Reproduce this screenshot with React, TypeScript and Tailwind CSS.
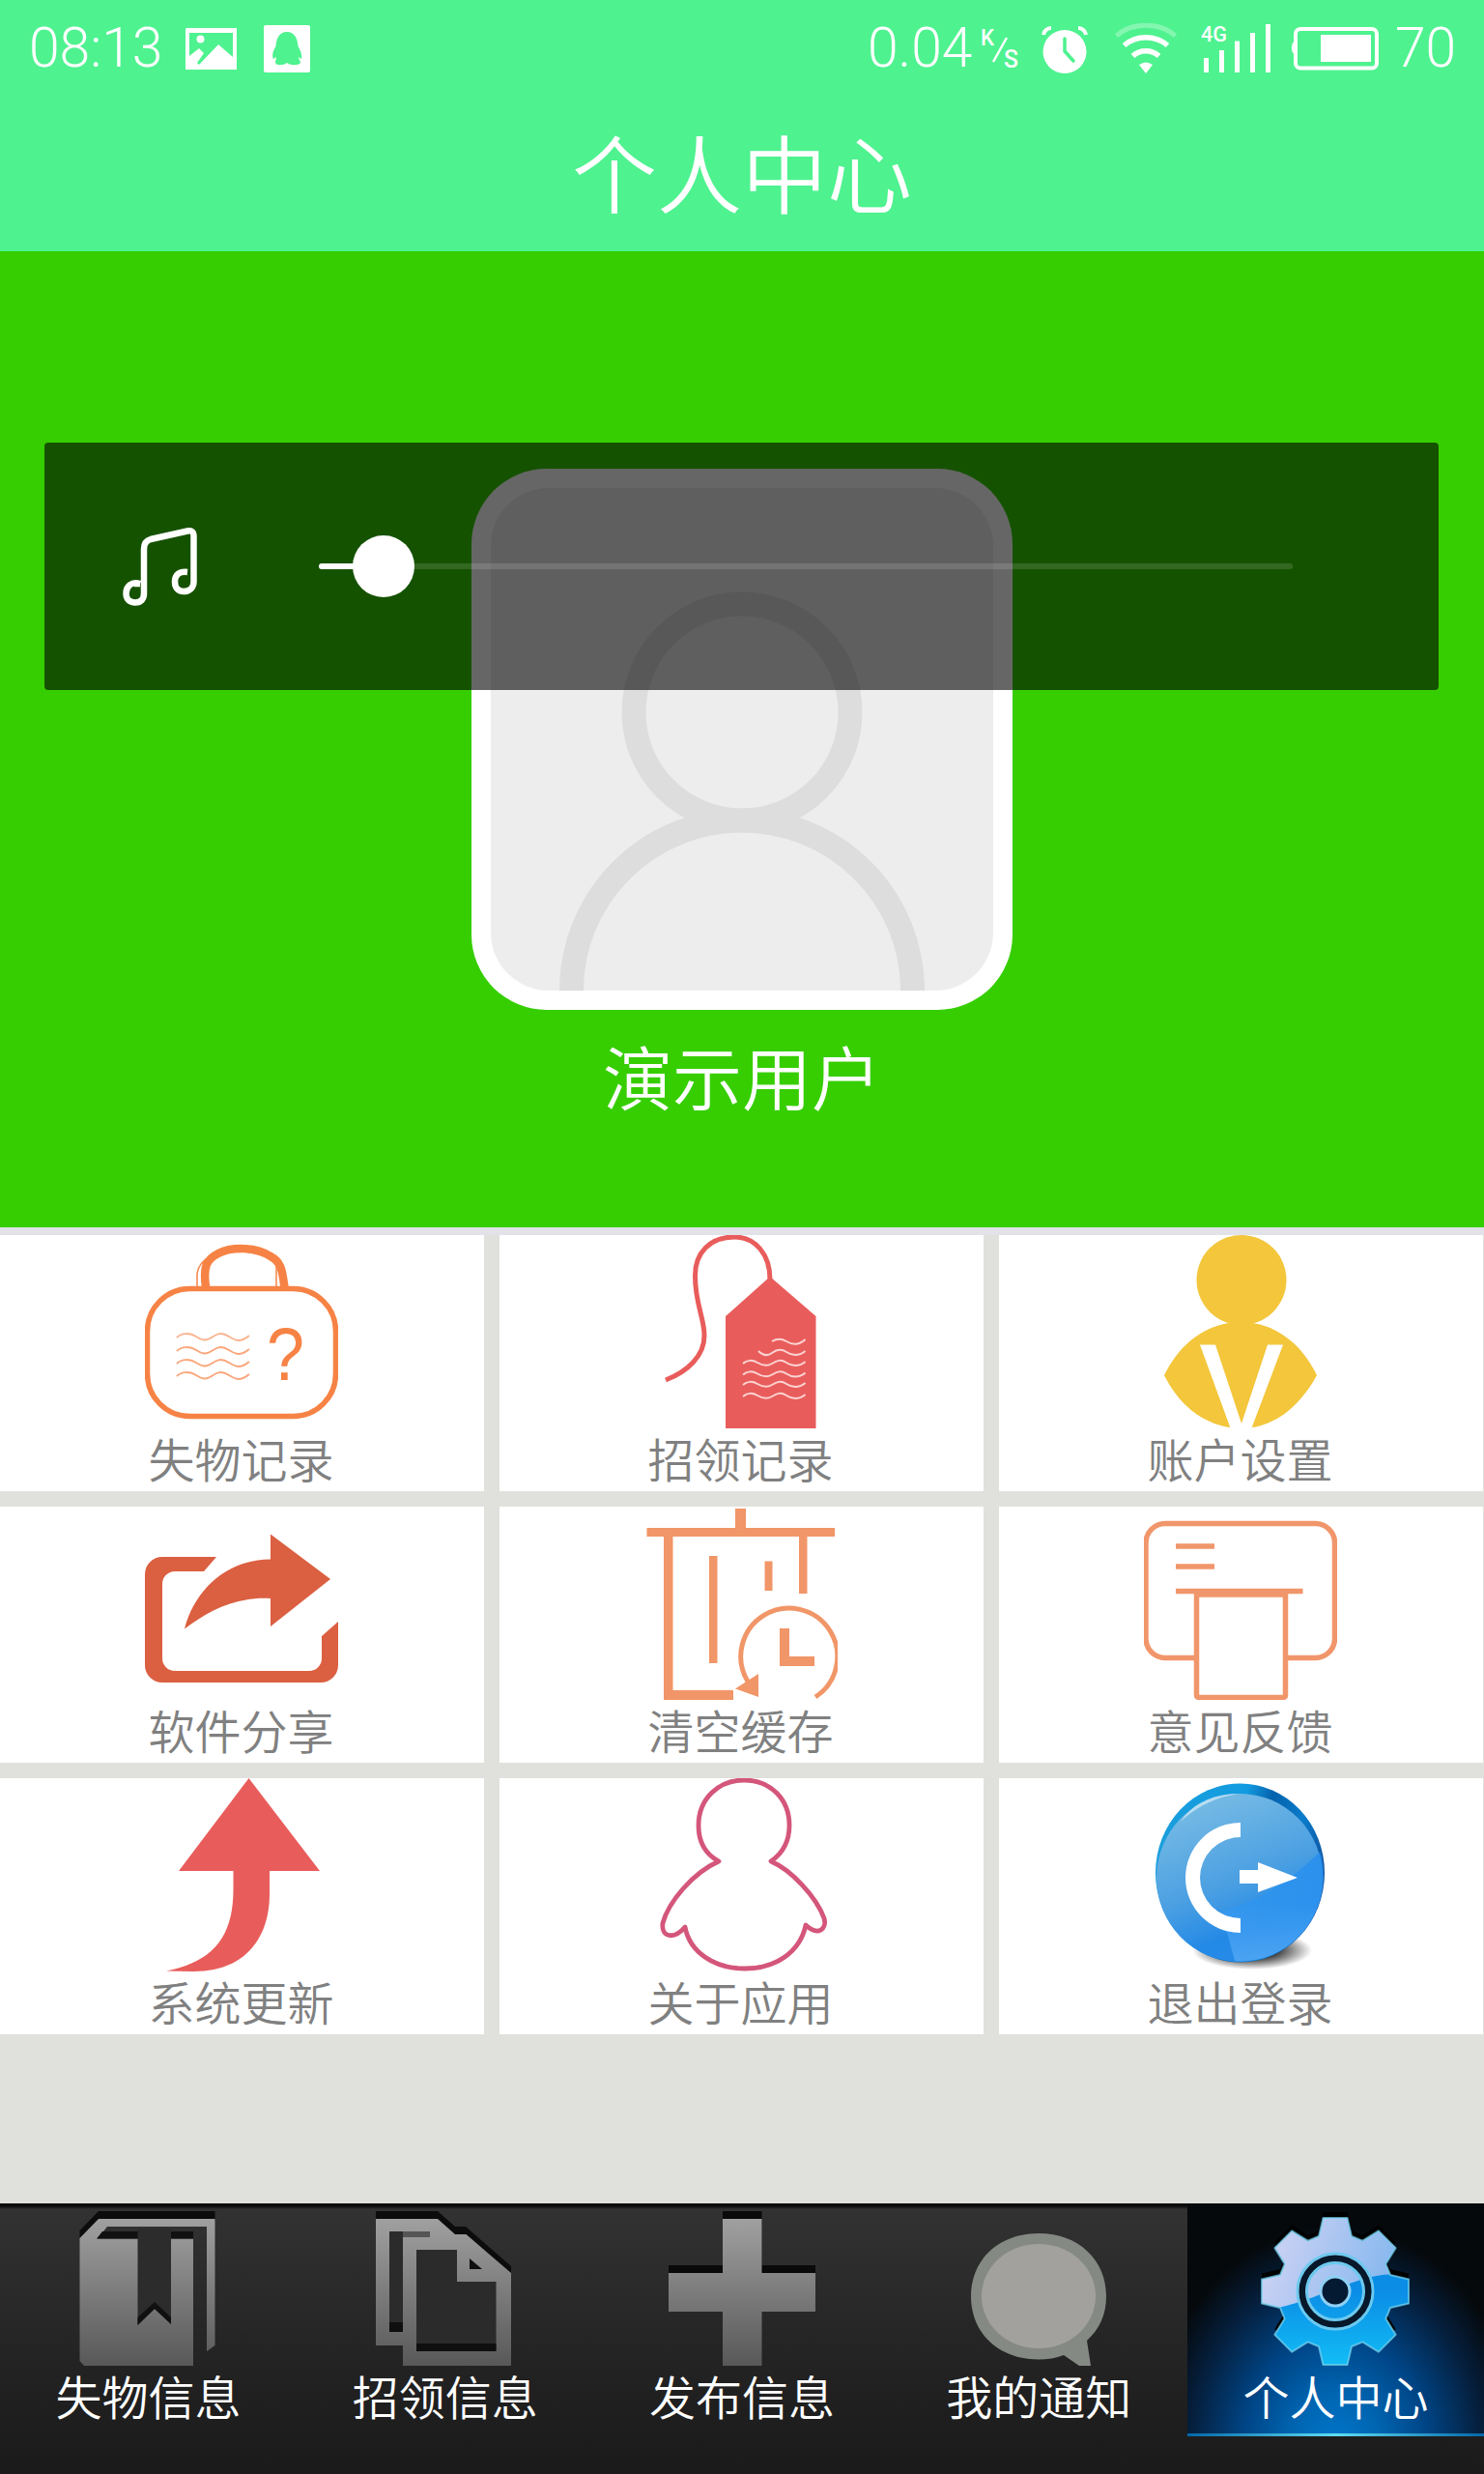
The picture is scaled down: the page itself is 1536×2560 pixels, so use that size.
import React from "react";

const CJK = "font-['Noto_Sans_CJK_SC',sans-serif]";

function Wave({ x, y, w, color }: { x: number; y: number; w: "a" | "b" | "c" | "d"; color: string }) {
  const shapes = {
    a: "M0 1 C5 -4 14 -4 20 0 S30 5 36 1 S46 -5 54 0 S66 6 75 -1",
    b: "M0 1 C4 -3 10 -3 15 0 S25 4 30 1 S39 -4 45 0 S57 5 64.5 -1",
    c: "M0 -1 C5 4 10 4 14 1 S23 -4 29 0 S41 5 48.5 -1",
    d: "M0 0 C5 -3 10 -3 15 0 S27 5 34.5 -2",
  };
  return <path d={shapes[w]} transform={`translate(${x} ${y})`} fill="none" stroke={color} strokeWidth="2" />;
}

function BagIcon() {
  return (
    <svg viewBox="0 0 200 200" className="size-[200px]" fill="none" stroke="#f68345">
      <rect x="2.5" y="55.5" width="195" height="132" rx="44" strokeWidth="5.500" />
      <path d="M63 54 C60 32 64 25 76 19 C90 12 115 12 130 22 C143 29 142 40 144.500 54" strokeWidth="8.500" />
      <path d="M54 54 V40 Q55 29 68 22 M136 54 V30" strokeWidth="1.500" />
      <Wave x={33} y={105} w="a" color="#f9b48f" />
      <Wave x={33} y={119} w="a" color="#f9a67b" />
      <Wave x={33} y={132} w="a" color="#f9a67b" />
      <Wave x={33} y={145} w="a" color="#f9a67b" />
      <text x="126" y="150" fontSize="78" fill="#f68345" stroke="none" fontFamily="Liberation Sans, sans-serif" textLength="39" lengthAdjust="spacingAndGlyphs">?</text>
    </svg>
  );
}

function TagIcon() {
  return (
    <svg viewBox="0 0 200 200" className="size-[200px]">
      <path d="M22 150 C45 141 62 125 62 104 C62 85 52.500 72 52.500 42 C52.500 18 68 2 93 2 C115 2 130 20 130 46" fill="none" stroke="#e85d5b" strokeWidth="5" />
      <path d="M130 43 L177.500 84 V200 H84 V84 Z" fill="#e85d5b" />
      <Wave x={132} y={110} w="d" color="#fbd3d2" />
      <Wave x={118} y={121} w="c" color="#fbd3d2" />
      <Wave x={102} y={132} w="b" color="#fbd3d2" />
      <Wave x={102} y={143.5} w="b" color="#fbd3d2" />
      <Wave x={102} y={154} w="b" color="#fbd3d2" />
      <Wave x={102} y={166} w="b" color="#fbd3d2" />
    </svg>
  );
}

function AccountIcon() {
  return (
    <svg viewBox="0 0 200 200" className="size-[200px]">
      <circle cx="101" cy="46.500" r="46.500" fill="#f3c63b" />
      <path d="M21 145 C37 112 65 90 100 90 C135 90 163 112 179 145 C160 180 132 200 101 200 C68 200 38 180 21 145 Z" fill="#f3c63b" />
      <path d="M58 113.500 H74 L101 195 L128 113.500 H144 L111 201 H90 Z" fill="#fff" />
    </svg>
  );
}

function ShareIcon() {
  return (
    <svg viewBox="0 0 200 200" className="size-[200px]" fill="#db5f41">
      <path d="M74 52 H18 A18 18 0 0 0 0 70 V164 A18 18 0 0 0 18 182 H182 A18 18 0 0 0 200 164 V119 L183 134 V157 A13 13 0 0 1 170 170 H31 A13 13 0 0 1 18 157 V80 A13 13 0 0 1 31 67 H61 Z" />
      <path d="M130 28.500 L192 75 L130 124 V95 C95 93 66 107 41 126.500 C52 85 85 55 130 54.500 Z" />
    </svg>
  );
}

function CacheIcon() {
  return (
    <svg viewBox="0 0 200 200" className="size-[200px]" fill="#f19668">
      <path d="M94 2 H105 V22 H197 V31 H168.500 V90 H160 V31 H29.500 V190 H92 V200 H20 V31 H2.500 V22 H94 Z" />
      <path d="M67 51 H75.500 V162 H67 Z M124.500 56.500 H132.500 V87 H124.500 Z M140 126 H150 V155 H176 V165 H140 Z" />
      <path d="M177 197 A50 50 0 1 0 107 181" fill="none" stroke="#f19668" strokeWidth="5" />
      <path d="M94 188.500 L118 173 V197 Z" />
    </svg>
  );
}

function FeedbackIcon() {
  return (
    <svg viewBox="0 0 200 200" className="size-[200px]" fill="none" stroke="#f1966b" strokeWidth="5.500">
      <rect x="2" y="17.500" width="195.500" height="139" rx="20" />
      <path d="M54.500 90 H146.500 V194.500 Q146.500 197.500 143.500 197.500 H57.500 Q54.500 197.500 54.500 194.500 Z" fill="#fff" />
      <path d="M33 41 H73 M33 62 H73 M33 87.500 H164.500 M52 91 H149" />
    </svg>
  );
}

function UpdateIcon() {
  return (
    <svg viewBox="0 0 200 200" className="size-[200px]" fill="#e85d5b">
      <path d="M107.500 0 L181 96 H129 V120 C129 165 104 200 50 200 L22 199.500 C70 190 91.500 165 91.500 115 V96 H35 Z" />
    </svg>
  );
}

function AboutIcon() {
  return (
    <svg viewBox="0 0 200 200" className="size-[200px]" fill="none" stroke="#d4567b" strokeWidth="4.800" strokeLinejoin="round">
      <path d="M77 86 C62 78 56 64 56 49 C56 21 77 2 103 2 C130 2 150 21 150 49 C150 64 144 77 131 86 C152 95 178 123 186 145 C189 156 180 164 167 152 C161 180 136 197 104 197 C72 197 47 180 42 154 C30 168 17 164 19 150 C25 128 50 98 77 86 Z" />
    </svg>
  );
}

function LogoutIcon() {
  return (
    <svg viewBox="0 0 200 200" className="size-[200px]">
      <defs>
        <linearGradient id="orb" x1="0.25" y1="0.1" x2="0.6" y2="1">
          <stop offset="0" stopColor="#72b8e4" />
          <stop offset="0.5" stopColor="#4a9fe2" />
          <stop offset="0.8" stopColor="#2389e6" />
          <stop offset="1" stopColor="#2a8dea" />
        </linearGradient>
        <linearGradient id="orbRim" x1="0" y1="0.2" x2="1" y2="0.5">
          <stop offset="0" stopColor="#1a9fdc" />
          <stop offset="0.45" stopColor="#129be0" />
          <stop offset="0.6" stopColor="#0562ac" />
          <stop offset="0.8" stopColor="#0a7ccb" />
          <stop offset="1" stopColor="#0f4f9a" />
        </linearGradient>
        <radialGradient id="orbShadow">
          <stop offset="0.400" stopColor="#000" stopOpacity="0.8" />
          <stop offset="1" stopColor="#000" stopOpacity="0" />
        </radialGradient>
        <linearGradient id="orbLow" x1="0.5" y1="0" x2="0.5" y2="1">
          <stop offset="0" stopColor="#1f8bee" />
          <stop offset="0.500" stopColor="#2f95f0" />
          <stop offset="1" stopColor="#58abf5" />
        </linearGradient>
        <clipPath id="orbClip"><ellipse cx="99.500" cy="101" rx="86.500" ry="88.500" /></clipPath>
      </defs>
      <ellipse cx="112" cy="178" rx="62" ry="20" fill="url(#orbShadow)" />
      <ellipse cx="99.500" cy="98" rx="87.500" ry="92.500" fill="url(#orbRim)" />
      <ellipse cx="99" cy="103" rx="86" ry="87" fill="url(#orb)" />
      <path d="M190 68 C150 110 118 126 80 138 L95 192 H190 Z" fill="url(#orbLow)" opacity="0.750" clipPath="url(#orbClip)" />
      <path d="M38 45 C50 26 72 16 98 16 C75 20 56 28 38 45 Z" fill="#d5edf8" opacity="0.700" />
      <path d="M100 46 V61 A42 42 0 0 0 100 145 V160 A57 57 0 0 1 100 46 Z" fill="#fff" />
      <path d="M99 95 H118 V87 L159 103 L118 118 V109 H99 Z" fill="#fff" />
    </svg>
  );
}

const cells = [
  { label: "失物记录", Icon: BagIcon },
  { label: "招领记录", Icon: TagIcon },
  { label: "账户设置", Icon: AccountIcon },
  { label: "软件分享", Icon: ShareIcon },
  { label: "清空缓存", Icon: CacheIcon },
  { label: "意见反馈", Icon: FeedbackIcon },
  { label: "系统更新", Icon: UpdateIcon },
  { label: "关于应用", Icon: AboutIcon },
  { label: "退出登录", Icon: LogoutIcon },
];

function GreyGradient({ id }: { id: string }) {
  return (
    <linearGradient id={id} gradientUnits="userSpaceOnUse" x1="0" y1="8" x2="0" y2="160">
      <stop offset="0" stopColor="#a0a0a0" />
      <stop offset="1" stopColor="#585858" />
    </linearGradient>
  );
}

function BookIcon() {
  return (
    <svg viewBox="0 0 160 160" className="size-40">
      <defs><GreyGradient id="book" /></defs>
      <path d="M28 0 H148.500 V10 H30 L8.500 28 V20 Z" fill="#0c0c0c" />
      <path d="M28 8 H148.500 V139 L140 145 V16 H37 L27 28.500 H126 V160 H13 L8.500 155 V28 Z" fill="url(#book)" />
      <path d="M32 21 H126 V28.500 H26 Z" fill="#111" />
      <path d="M68.500 18 H103 V117 L86 101 L68.500 118 Z" fill="#2c2c2c" />
      <path d="M68.500 110 L86 94 L103 110 V117 L86 101 L68.500 118 Z" fill="#101010" />
    </svg>
  );
}

function DocsIcon() {
  return (
    <svg viewBox="0 0 160 160" className="size-40">
      <defs><GreyGradient id="docs" /></defs>
      <path d="M8 0 H72 L90 16 H101 L148 57 V66 H8 Z" fill="#0c0c0c" />
      <path d="M8 8 H72 L90 24 H101.500 L148 64 V160 H36 V139 H8 Z" fill="url(#docs)" />
      <path d="M22 21 H36 V125 H22 Z M50 40 H92 V73 H132.500 V145 H50 Z" fill="#2b2b2b" />
      <path d="M22 115 H36 V125 H22 Z M50 137 H132.500 V145 H50 Z M105 49 L118 60 H105 Z" fill="#0f0f0f" />
      <path d="M36 21 H64 V27 H36 Z" fill="#555" />
    </svg>
  );
}

function PlusIcon() {
  return (
    <svg viewBox="0 0 160 160" className="size-40">
      <defs><GreyGradient id="plus" /></defs>
      <path d="M60 0 H100.500 V56 H156 V70 H4 V56 H60 Z" fill="#0a0a0a" />
      <path d="M60 8 H100.500 V64 H156 V104 H100.500 V160 H60 V104 H4 V64 H60 Z" fill="url(#plus)" />
    </svg>
  );
}

function BubbleIcon() {
  return (
    <svg viewBox="0 0 160 160" className="size-40">
      <path d="M80 23 C122 23 150 51 150 88 C150 107 143 122 130 134 L134 160 H122 L106 149 C98 152 89 153.500 80 153.500 C38 153.500 10 126 10 88 C10 51 38 23 80 23 Z" fill="#858984" />
      <ellipse cx="80" cy="88" rx="59" ry="54" fill="#a3a19e" />
    </svg>
  );
}

function GearIcon() {
  const points: string[] = [];
  const profile = [[-17, 57], [-12.5, 76], [12.5, 76], [17, 57]];
  for (let i = 0; i < 8; i++) {
    const a = (i * Math.PI) / 4;
    for (const [x, r] of profile) {
      const px = 80 + x * Math.cos(a) + r * Math.sin(a);
      const py = 83 + x * Math.sin(a) - r * Math.cos(a);
      points.push(`${px.toFixed(1)},${py.toFixed(1)}`);
    }
  }
  const shape = points.join(" ");
  return (
    <svg viewBox="0 0 160 160" className="size-40">
      <defs>
        <linearGradient id="gearTop" x1="0" y1="0" x2="1" y2="0.400">
          <stop offset="0" stopColor="#d6d6f4" />
          <stop offset="1" stopColor="#7db4ee" />
        </linearGradient>
        <linearGradient id="gearLow" x1="0" y1="0.500" x2="0" y2="1">
          <stop offset="0" stopColor="#0b8de6" />
          <stop offset="1" stopColor="#12bdf5" />
        </linearGradient>
        <clipPath id="gearClip"><path d="M0 103 C40 100 75 80 110 70 C130 64 145 64 160 70 V160 H0 Z" /></clipPath>
      </defs>
      <polygon points={shape} fill="#000" transform="translate(0 -6)" />
      <polygon points={shape} fill="url(#gearTop)" />
      <polygon points={shape} fill="url(#gearLow)" clipPath="url(#gearClip)" />
      <polygon points={shape} fill="none" stroke="#74d3ee" strokeWidth="2" strokeLinejoin="round" opacity="0.700" />
      <circle cx="80" cy="83" r="39" fill="none" stroke="#6cc9ee" strokeWidth="3" />
      <circle cx="80" cy="83" r="34" fill="none" stroke="#07182a" strokeWidth="7" />
      <circle cx="80" cy="83" r="29.500" fill="none" stroke="#6cc9ee" strokeWidth="3" />
      <circle cx="80" cy="83" r="15" fill="#041a33" stroke="#8fd0f4" strokeWidth="3" />
    </svg>
  );
}

const tabs = [
  { label: "失物信息", Icon: BookIcon },
  { label: "招领信息", Icon: DocsIcon },
  { label: "发布信息", Icon: PlusIcon },
  { label: "我的通知", Icon: BubbleIcon },
  { label: "个人中心", Icon: GearIcon, active: true },
];

function StatusBar() {
  return (
    <div className="flex h-[98px] items-center pl-[30px] font-[Roboto,sans-serif] text-[57px] font-light leading-none text-white">
      <span className="w-[162px] shrink-0 whitespace-nowrap">08:13</span>
      <svg width="54" height="44" viewBox="0 0 54 44" className="mt-[3px]">
        <path fillRule="evenodd" fill="#fff" d="M1 0 H53 V43 H0 V1 Z M4 5 V29 L14 21 L19 26 L12 36 L14 38 L34 17 L49 30 V5 Z" />
        <circle cx="15.500" cy="11.500" r="4" fill="#fff" />
      </svg>
      <svg width="48" height="49" viewBox="0 0 48 49" className="ml-[27px] mt-[3px]">
        <rect width="48" height="49" rx="2" fill="#fff" />
        <path d="M24 7 C32 7 35 14 35.500 22 C38 26 40 31 39 35 L36 33 C36 35 38 37 38 39 C36 42 28 42 24 39 C20 42 13 42 12 39 C12 37 13 35 13 33 L10 35 C8 31 10 26 12.500 22 C13 14 16 7 24 7 Z" fill="#4ef28f" />
      </svg>
      <span className="ml-[577px] w-[117px] shrink-0 whitespace-nowrap">0.04</span>
      <svg width="39" height="43" viewBox="0 0 39 43" className="mt-0.5 overflow-visible" fill="#fff">
        <text x="0" y="18" fontSize="23" fontWeight="500" fontFamily="Roboto, sans-serif" textLength="14" lengthAdjust="spacingAndGlyphs">K</text>
        <text x="24" y="41" fontSize="26" fontWeight="500" fontFamily="Roboto, sans-serif" textLength="15" lengthAdjust="spacingAndGlyphs">S</text>
        <path d="M27 10 L13 35" stroke="#fff" strokeWidth="2.500" />
      </svg>
      <svg width="48" height="50" viewBox="0 0 48 50" className="ml-[24px] mt-[6px]">
        <path d="M2 9 A8 8 0 0 1 10 2 M46 9 A8 8 0 0 0 38 2" stroke="#fff" strokeWidth="4" fill="none" />
        <ellipse cx="24" cy="26.500" rx="22.500" ry="22.500" fill="#fff" />
        <path d="M24 13 V26 L33 36" stroke="#4ef28f" strokeWidth="3.500" fill="none" strokeLinecap="round" />
      </svg>
      <svg width="64" height="52" viewBox="0 0 64 52" className="ml-[28px] mt-[2px]" fill="none" stroke="#fff">
        <path d="M1.500 13 C18 -1.500 46 -1.500 62.500 13" strokeWidth="5" opacity="0.300" />
        <path d="M9.500 23 C22 12 42 12 54.500 23" strokeWidth="5.500" />
        <path d="M18.500 34 C26 27 38 27 45.500 34" strokeWidth="5.500" />
        <path d="M25 43 Q32 38 39 43 L32 52 Z" fill="#fff" stroke="none" />
      </svg>
      <svg width="73" height="52" viewBox="0 0 73 52" className="ml-[25px] mt-[1px] overflow-visible" fill="#fff">
        <text x="0" y="18.500" fontSize="22" fontWeight="500" fontFamily="Roboto, sans-serif" textLength="27" lengthAdjust="spacingAndGlyphs">4G</text>
        <path d="M3 36 H8 V51 H3 Z M19 28 H24 V51 H19 Z M35 18.500 H40 V51 H35 Z M51 10 H56 V51 H51 Z M67 1 H72 V51 H67 Z" />
      </svg>
      <svg width="92" height="45" viewBox="0 0 92 45" className="ml-[20px] mt-[2px]">
        <rect x="5" y="2" width="84" height="40.500" rx="5" fill="none" stroke="#fff" strokeWidth="4" />
        <path d="M4 16 H2 Q0 22 2 27 H4 Z" fill="#fff" />
        <rect x="31" y="8" width="52" height="28" fill="#fff" />
      </svg>
      <span className="ml-[16px] whitespace-nowrap">70</span>
    </div>
  );
}

function Avatar() {
  return (
    <svg viewBox="0 0 560 560" className="size-[560px]">
      <rect width="560" height="560" rx="78" fill="#fff" />
      <rect x="20" y="20" width="520" height="520" rx="60" fill="#ededed" />
      <circle cx="280" cy="252" r="112" fill="none" stroke="#ddd" strokeWidth="25" />
      <path d="M103.500 540 A176.500 176 0 0 1 456.500 540" fill="none" stroke="#ddd" strokeWidth="25" />
    </svg>
  );
}

function VolumePanel() {
  return (
    <div className="absolute left-[46px] top-[198px] flex h-64 w-[1443px] items-center rounded bg-black/60 pl-[81px]">
      <svg width="78" height="81" viewBox="0 0 78 81" fill="none" stroke="#fff" strokeWidth="6.500">
        <path d="M18 58 H12 M18 58 C9 55 3.500 61 3.500 68 C3.500 74 7 77.500 13 77.500 C19 77.500 22 74 22 68 V22 Q22 14 29 12 L67 3.500 Q73.500 2 73.500 9 V56 C73.500 62 69 66 63 66 C57 66 54 62 54 56 C54 49 58 45 67 46" />
      </svg>
      <div className="relative ml-[125px] h-1.5 w-[1008px] rounded-sm bg-white/[0.13]">
        <div className="h-full w-16 rounded-sm bg-white" />
        <div className="absolute -top-[29px] left-[35px] size-16 rounded-full bg-white" />
      </div>
    </div>
  );
}

export default function App() {
  return (
    <div className={`flex h-[2560px] w-[1536px] flex-col overflow-hidden bg-[#e0e1dc] font-[350] ${CJK}`}>
      <header className="h-[260px] bg-[#4ef28f] text-white">
        <StatusBar />
        <h1 className="h-[162px] text-center text-[88px] font-[350] leading-[155px]">个人中心</h1>
      </header>

      <section className="relative flex h-[1010px] flex-col items-center bg-[#36ce00] pt-[225px]">
        <Avatar />
        <div className="mt-[15px] text-[72px] leading-[104px] text-white">演示用户</div>
        <VolumePanel />
      </section>

      <main className="flex-1">
        <div className="h-2 bg-[#e1e3e8]" />
        <div className="grid grid-cols-[501px_501px_501px] gap-4">
          {cells.map(({ label, Icon }) => (
            <div key={label} className="flex h-[265px] flex-col items-center bg-white pr-0.5">
              <Icon />
              <span className="text-[48px] leading-[61px] text-[#808080]">{label}</span>
            </div>
          ))}
        </div>
      </main>

      <nav className="grid h-[280px] grid-cols-5 bg-[linear-gradient(#0c0c0c_0px,#0c0c0c_3px,#323232_6px,#1f1f1f_75%,#1b1b1b_100%)]">
        {tabs.map(({ label, Icon, active }) => (
          <div
            key={label}
            className={
              active
                ? "flex h-[241px] flex-col items-center bg-[linear-gradient(90deg,#0466a8,#5fdcf2_50%,#0466a8),radial-gradient(ellipse_62%_95%_at_50%_105%,#0078cc_0%,#0064b0_25%,#004586_50%,#05203f_78%,#05090c_100%)] bg-[length:100%_3px,100%_100%] bg-bottom bg-no-repeat pt-2"
                : "flex h-[241px] flex-col items-center pt-2"
            }
          >
            <Icon />
            <span className="text-[48px] leading-[61px] text-white">{label}</span>
          </div>
        ))}
      </nav>
    </div>
  );
}
